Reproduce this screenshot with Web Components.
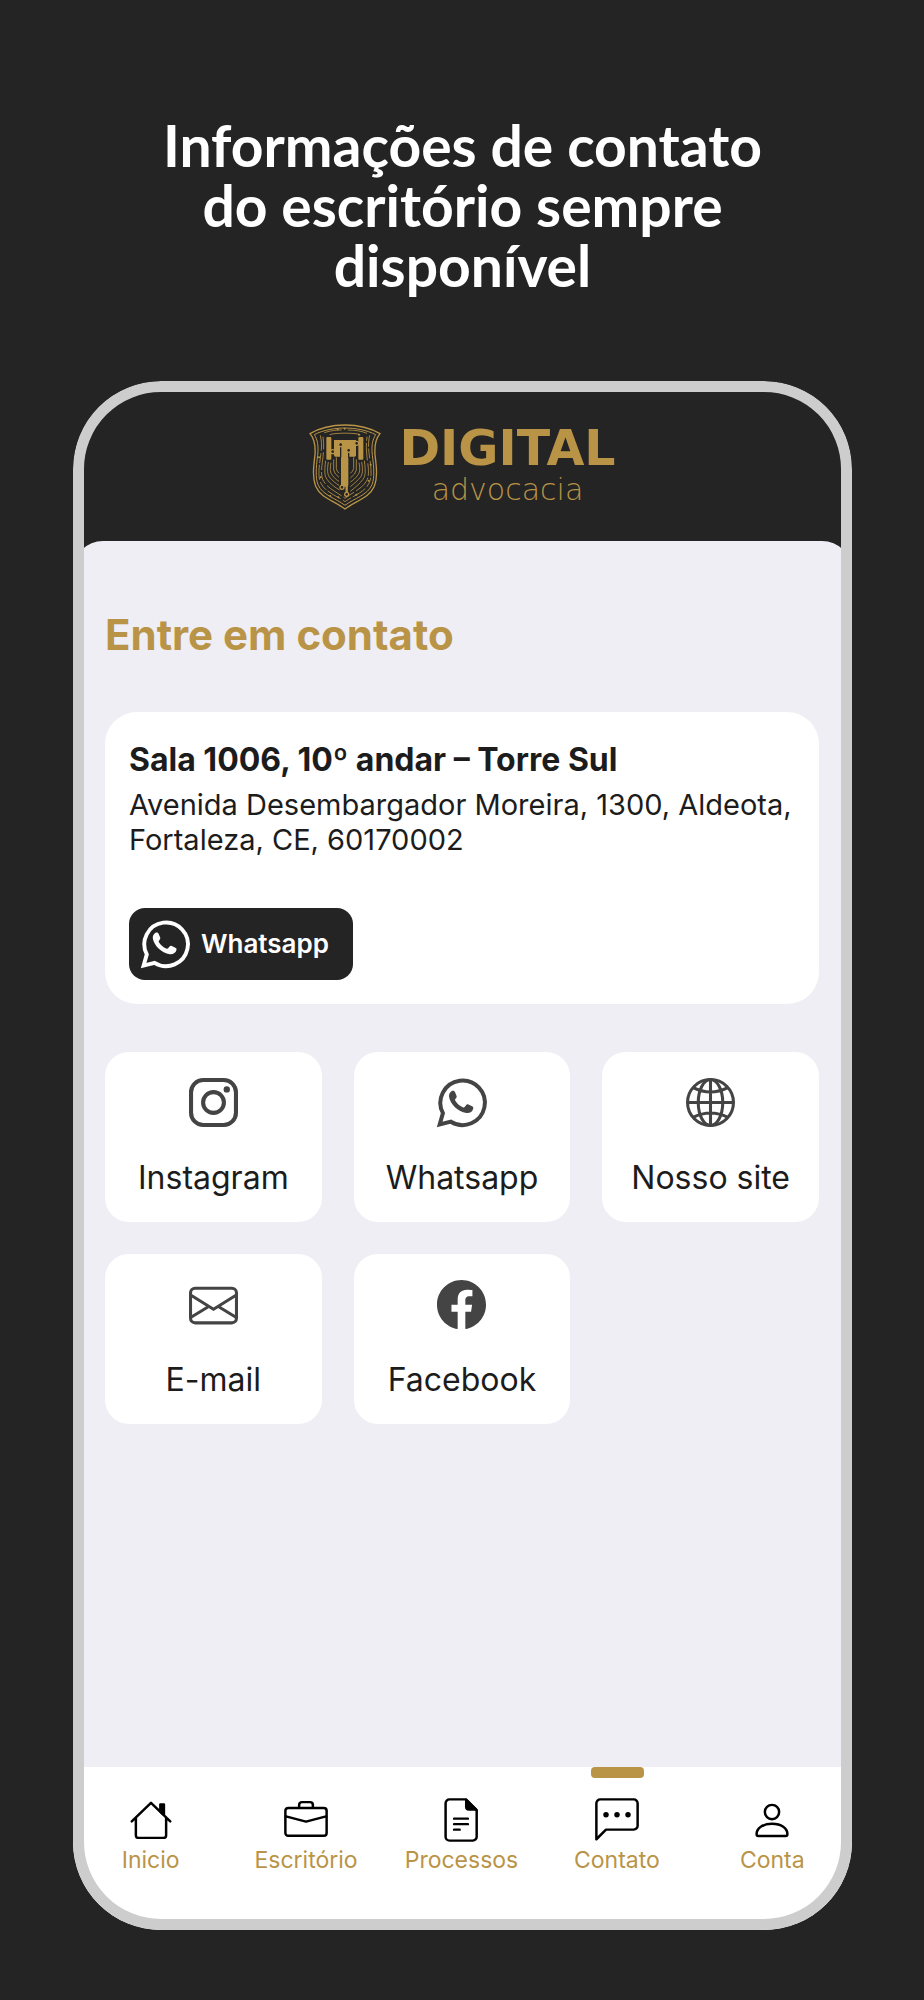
<!DOCTYPE html>
<html lang="pt-BR">
<head>
<meta charset="utf-8">
<meta name="viewport" content="width=device-width, initial-scale=1">
<title>Digital Advocacia – Contato</title>
<style>
  html { background: #242424; }
  body {
    margin: 0;
    --dark: #242424; --gold: #b99447; --sheet: #efeef4; --frame: #cdcdcd; --ink: #1c1c1c; --icon: #444;
    font-family: Inter, "Liberation Sans", sans-serif;
    color: var(--ink);
  }
</style>
</head>
<body>
<promo-page>
  <h1 slot="headline">Informações de contato<br>do escritório sempre<br>disponível</h1>
  <phone-frame>
    <brand-logo slot="header"></brand-logo>
    <contact-sheet>
      <span slot="title">Entre em contato</span>
      <address-card>
        <span slot="name">Sala 1006, 10º andar – Torre Sul</span>
        <span slot="street">Avenida Desembargador Moreira, 1300, Aldeota, Fortaleza, CE, 60170002</span>
        <span slot="action">Whatsapp</span>
      </address-card>
      <contact-grid>
        <contact-tile icon="instagram">Instagram</contact-tile>
        <contact-tile icon="whatsapp">Whatsapp</contact-tile>
        <contact-tile icon="globe">Nosso site</contact-tile>
        <contact-tile icon="mail">E-mail</contact-tile>
        <contact-tile icon="facebook">Facebook</contact-tile>
      </contact-grid>
    </contact-sheet>
    <tab-bar slot="footer">
      <tab-item icon="home">Inicio</tab-item>
      <tab-item icon="briefcase">Escritório</tab-item>
      <tab-item icon="document">Processos</tab-item>
      <tab-item icon="chat" active>Contato</tab-item>
      <tab-item icon="person">Conta</tab-item>
    </tab-bar>
  </phone-frame>
</promo-page>
<script>
const define = (name, html, setup) => {
  const tpl = document.createElement('template');
  tpl.innerHTML = html;
  customElements.define(name, class extends HTMLElement {
    connectedCallback() {
      if (this.shadowRoot) return;
      this.attachShadow({ mode: 'open' }).append(tpl.content.cloneNode(true));
      if (setup) setup(this, this.shadowRoot);
    }
  });
};

/* Card icons use a 48 unit box, tab icons a 16 unit box. */
const ICONS = {
  instagram: [48, '<g fill="none" stroke="currentColor" stroke-width="4"><rect x="2" y="2" width="44" height="44" rx="12"/><circle cx="24" cy="24" r="10.2"/></g><circle cx="37" cy="11.2" r="3.1" fill="currentColor"/>'],
  whatsapp: [48, '<path d="M2.6 45.6 5.8 34.4A21.8 21.8 0 1 1 13.6 42.8Z" fill="none" stroke="currentColor" stroke-width="3.9"/><path d="M14.2 12.9c1.3-.9 2.8-.5 3.4.9l1.5 3.5c.5 1.2 0 2-.8 2.9-.8.9-.8 1.5-.2 2.3 1.9 2.8 4.1 4.8 7.1 6.1.9.4 1.5.3 2.1-.5l1.5-1.8c.5-.7 1.2-.8 2-.4l3.6 1.8c1 .5 1.3 1 1.1 2.1-.6 3.2-3.6 4.9-6.7 4.5C20.5 33 12.900 25.5 11.800 18.300c-.2-2.200.7-4.300 2.400-5.400z" fill="currentColor"/>'],
  globe: [48, '<g fill="none" stroke="currentColor" stroke-width="3"><circle cx="24" cy="24" r="22.5"/><ellipse cx="24" cy="24" rx="12" ry="22.5"/><path d="M24 1.5v45M1.5 24h45M7 9.5q17 8.5 34 0M7 38.5q17-8.5 34 0"/></g>'],
  mail: [48, '<g fill="none" stroke="currentColor" stroke-width="3"><rect x="1.5" y="8" width="45" height="34" rx="4.5"/><path d="M2 15 24 28.700 46 15M2 36.500 18.500 26.500M46 36.500 29.500 26.500"/></g>'],
  facebook: [16, '<path fill="currentColor" d="M16 8.049c0-4.446-3.582-8.05-8-8.05C3.58 0-.002 3.603-.002 8.05c0 4.017 2.926 7.347 6.75 7.951v-5.625h-2.03V8.05H6.75V6.275c0-2.017 1.195-3.131 3.022-3.131.876 0 1.791.157 1.791.157v1.98h-1.009c-.993 0-1.303.621-1.303 1.258v1.51h2.218l-.354 2.326H9.25V16c3.824-.604 6.75-3.934 6.75-7.951z"/>'],
  home: [16, '<path d="M1 8.5 8 1.75l7 6.75M2.500 7.300v6.200a1 1 0 0 0 1 1h9a1 1 0 0 0 1-1V7.300"/><path d="M11.400 2.400h1.300v3.700l-1.300-1.200z" fill="currentColor"/>'],
  briefcase: [16, '<rect x=".5" y="3.6" width="15" height="10.1" rx="1"/><path d="M5.5 3.5v-1a1 1 0 0 1 1-1h3a1 1 0 0 1 1 1v1M.7 6.7 8 8.6l7.3-1.9"/>'],
  document: [16, '<path d="M9.8.5h-6a1.4 1.4 0 0 0-1.400 1.400v12.200a1.400 1.400 0 0 0 1.400 1.400h8.500a1.400 1.400 0 0 0 1.400-1.400V4.400zM5.500 7.500h5M5.500 9.500h5M5.500 11.500h2"/><path d="M9.900.7v2.500a1 1 0 0 0 1 1h2.600z" fill="currentColor"/>'],
  chat: [16, '<path d="M1.900.5h12.200a1.400 1.400 0 0 1 1.400 1.400v8.200a1.400 1.400 0 0 1-1.400 1.400H4L.5 15V1.900A1.400 1.400 0 0 1 1.900.5z"/><g fill="currentColor" stroke="none"><circle cx="4" cy="6.100" r="1"/><circle cx="8" cy="6.100" r="1"/><circle cx="12" cy="6.100" r="1"/></g>'],
  person: [16, '<circle cx="8" cy="5.100" r="2.600"/><path d="M2.400 13.200C2.400 11 4.600 9.400 8 9.400s5.600 1.600 5.600 3.800c0 .4-.2.6-.6.6H3c-.4 0-.6-.2-.6-.6z"/>']
};

define('ui-icon', `
  <style>
    :host { display: block; flex: none; width: var(--size, 48px); height: var(--size, 48px); }
    svg { display: block; width: 100%; height: 100%; overflow: visible; }
    :host([outline]) svg { fill: none; stroke: currentColor; stroke-width: .9; stroke-linecap: round; stroke-linejoin: round; }
  </style><svg aria-hidden="true"></svg>`, (el, root) => {
  const [box, markup] = ICONS[el.getAttribute('name')];
  const svg = root.querySelector('svg');
  svg.setAttribute('viewBox', `0 0 ${box} ${box}`);
  svg.innerHTML = markup;
});

function addIcon(link, name, outline) {
  const icon = document.createElement('ui-icon');
  icon.setAttribute('name', name);
  if (outline) icon.setAttribute('outline', '');
  link.prepend(icon);
}

define('promo-page', `
  <style>
    :host { display: flex; flex-direction: column; gap: 86px; box-sizing: border-box;
      min-height: 100vh; padding: 115px 72px 70px 73px; background: var(--dark); }
    ::slotted(h1) { margin: 0; color: #fff; text-align: center; font: 700 57px/60px Lato, "Liberation Sans", sans-serif; }
    main { display: flex; flex: 1; }
  </style>
  <slot name="headline"></slot>
  <main><slot></slot></main>`);

define('phone-frame', `
  <style>
    :host { position: relative; display: flex; flex-direction: column; flex: 1; min-width: 0;
      overflow: hidden; border-radius: 88px; background: var(--dark); }
    :host::after { content: ""; position: absolute; inset: 0; border: 11px solid var(--frame);
      border-radius: inherit; pointer-events: none; }
    header { display: flex; justify-content: center; padding: 43px 0 31px; }
  </style>
  <header><slot name="header"></slot></header>
  <slot></slot>
  <slot name="footer"></slot>`);

define('brand-logo', `
  <style>
    :host { display: flex; align-items: flex-start; gap: 18px; color: var(--gold); }
    svg { display: block; width: 72px; height: 86px; }
    .words { display: flex; flex-direction: column; align-items: center; }
    .top { font: 700 49px/50px "DejaVu Sans", sans-serif; }
    .sub { font: 200 30px/32px "DejaVu Sans Light", "DejaVu Sans", sans-serif; }
  </style>
  <svg viewBox="20 18 216 258" fill="none" stroke="currentColor" aria-hidden="true">
    <path stroke-width="4" d="M128 21C95 21 55 28 23 47C36 62 40 80 38 110C33 150 30 180 40 205C55 240 95 248 128 273C161 248 201 240 216 205C226 180 223 150 218 110C216 80 220 62 233 47C201 28 161 21 128 21Z"/>
    <path stroke-width="3" d="M128 30C98 30 62 36 36 50C46 66 49 84 46 112C41 150 39 178 47 200C61 232 99 240 128 262C157 240 195 232 209 200C217 178 215 150 210 112C207 84 210 66 220 50C194 36 158 30 128 30Z"/>
    <g stroke-width="2.5">
      <path stroke-dasharray="46 7 30 5" d="M54 52C60 76 57 100 54 120C48 160 48 180 56 196C70 224 102 232 128 251C154 232 186 224 200 196C208 180 208 160 202 120C199 100 196 76 202 52"/>
      <path stroke-dasharray="38 8 54 6" d="M62 56C66 84 63 108 61 126C56 160 56 176 64 190C78 213 104 222 128 241C152 222 178 213 192 190C200 176 200 160 195 126C193 108 190 84 194 56"/>
      <path d="M70 128C66 160 66 172 74 184C84 198 98 208 112 216M186 128C190 160 190 172 182 184C172 198 158 208 144 220"/>
      <path d="M78 132C74 158 75 168 82 178C90 188 100 196 110 202M178 132C182 158 181 168 174 178C166 188 156 196 144 206"/>
      <path d="M86 134C82 156 84 164 90 172C96 180 102 186 110 190M170 134C174 156 172 164 166 172C160 180 154 186 144 192"/>
      <path d="M94 124v32q2 12 16 22M162 124v32q-2 12-18 24M102 118v34q2 8 8 14M154 118v34q-2 8-10 14"/>
      <path d="M66 44C86 37 104 36 118 36M136 36C160 36 180 40 194 46M82 50C98 44 158 44 174 50"/>
    </g>
    <g fill="currentColor" stroke="none">
      <rect x="72" y="57" width="15" height="68" rx="3"/><rect x="168" y="57" width="15" height="68" rx="3"/>
      <path d="M95 66h66v46q0 4-4 4h-19v84q0 6-4 6h-14q-4 0-4-6v-84h-17q-4 0-4-4z"/>
      <circle cx="106" cy="34" r="3"/><circle cx="127" cy="32" r="3"/><circle cx="170" cy="50" r="3"/><circle cx="50" cy="118" r="3"/><circle cx="55" cy="178" r="3"/><circle cx="205" cy="140" r="3"/><circle cx="199" cy="188" r="3"/><circle cx="84" cy="234" r="3"/><circle cx="108" cy="238" r="3"/><circle cx="162" cy="230" r="3"/>
    </g>
    <path stroke="#242424" stroke-width="4" d="M115 80v38M139 97v22M163 76v-14M91 101v24"/>
    <path stroke-width="7" d="M133 175v50"/>
    <g fill="#242424" stroke-width="4"><circle cx="115" cy="80" r="6"/><circle cx="91" cy="101" r="6"/><circle cx="139" cy="97" r="6"/><circle cx="163" cy="76" r="6"/><circle cx="119" cy="208" r="6"/><circle cx="133" cy="229" r="6"/></g>
  </svg>
  <div class="words"><span class="top">DIGITAL</span><span class="sub">advocacia</span></div>`);

define('contact-sheet', `
  <style>
    :host { display: flex; flex-direction: column; flex: 1; padding: 68px 33px 32px 32px;
      border-radius: 30px 30px 0 0; background: var(--sheet); }
    h2 { margin: 0 0 51px; color: var(--gold); font-size: 42px; line-height: 52px; font-weight: 700; }
  </style>
  <h2><slot name="title"></slot></h2>
  <slot></slot>`);

define('address-card', `
  <style>
    :host { display: block; margin-bottom: 48px; padding: 28px 24px 24px; border-radius: 32px; background: #fff; }
    h3 { margin: 0 0 7px; font-size: 32px; line-height: 40px; font-weight: 700; }
    p { margin: 0 0 51px; font-size: 29px; line-height: 35px; }
    button { display: flex; align-items: center; gap: 12px; margin: 0; padding: 12px 24px 12px 12px; border: 0;
      border-radius: 16px; background: var(--dark); color: #fff; font: inherit; font-size: 26px; line-height: 32px; font-weight: 600; }
  </style>
  <h3><slot name="name"></slot></h3>
  <p><slot name="street"></slot></p>
  <button type="button"><ui-icon name="whatsapp"></ui-icon><slot name="action"></slot></button>`);

define('contact-grid', `
  <style>:host { display: grid; grid-template-columns: repeat(3, 1fr); gap: 32px; }</style>
  <slot></slot>`);

define('contact-tile', `
  <style>
    :host { display: block; }
    a { display: flex; flex-direction: column; align-items: center; gap: 31px; padding: 26px 0 24px; border-radius: 24px;
      background: #fff; color: inherit; font-size: 32px; line-height: 40px; text-decoration: none; white-space: nowrap; }
    ui-icon { --size: 49px; color: var(--icon); }
  </style>
  <a href="#"><span><slot></slot></span></a>`, (el, root) => {
  addIcon(root.querySelector('a'), el.getAttribute('icon'));
});

define('tab-bar', `
  <style>
    :host { display: block; background: #fff; }
    nav { display: grid; grid-template-columns: repeat(5, 1fr); padding-right: 2px; }
  </style>
  <nav><slot></slot></nav>`);

define('tab-item', `
  <style>
    :host { display: block; position: relative; }
    a { display: flex; flex-direction: column; align-items: center; gap: 4px; padding: 31px 0 56px;
      color: var(--gold); font-size: 23px; line-height: 28px; text-decoration: none; }
    ui-icon { --size: 44px; color: #000; }
    :host([active])::before { content: ""; position: absolute; top: 0; left: 50%; width: 53px; height: 11px;
      margin-left: -26px; border-radius: 4px; background: var(--gold); }
  </style>
  <a href="#"><span><slot></slot></span></a>`, (el, root) => {
  const link = root.querySelector('a');
  addIcon(link, el.getAttribute('icon'), true);
  if (el.hasAttribute('active')) link.setAttribute('aria-current', 'page');
});
</script>
</body>
</html>
